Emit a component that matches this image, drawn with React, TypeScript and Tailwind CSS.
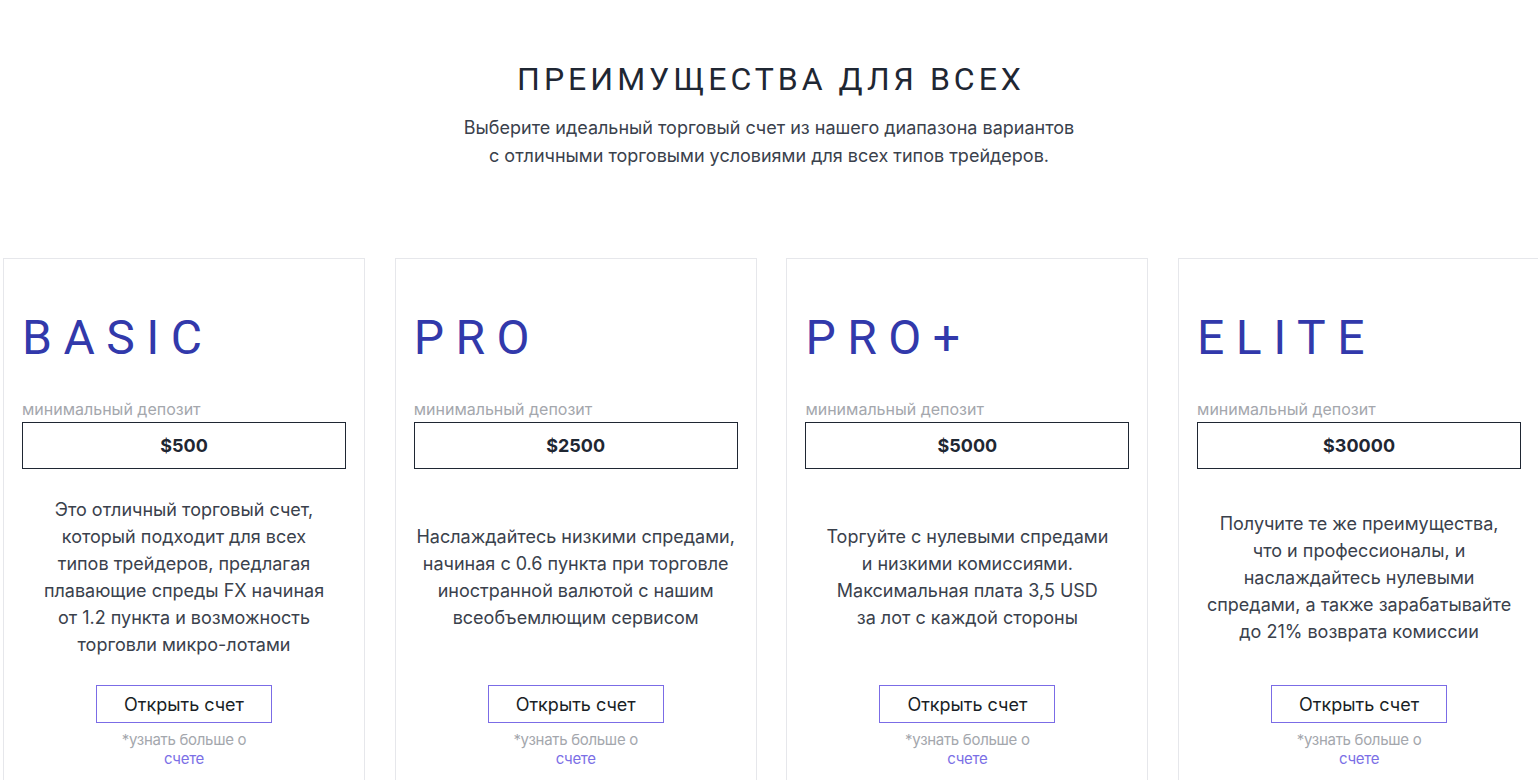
import React from "react";

const cards = [
  {
    name: "BASIC",
    deposit: "$500",
    lines: [
      "Это отличный торговый счет,",
      "который подходит для всех",
      "типов трейдеров, предлагая",
      "плавающие спреды FX начиная",
      "от 1.2 пункта и возможность",
      "торговли микро-лотами",
    ],
  },
  {
    name: "PRO",
    deposit: "$2500",
    lines: [
      "Наслаждайтесь низкими спредами,",
      "начиная с 0.6 пункта при торговле",
      "иностранной валютой с нашим",
      "всеобъемлющим сервисом",
    ],
  },
  {
    name: "PRO+",
    deposit: "$5000",
    lines: [
      "Торгуйте с нулевыми спредами",
      "и низкими комиссиями.",
      "Максимальная плата 3,5 USD",
      "за лот с каждой стороны",
    ],
  },
  {
    name: "ELITE",
    deposit: "$30000",
    lines: [
      "Получите те же преимущества,",
      "что и профессионалы, и",
      "наслаждайтесь нулевыми",
      "спредами, а также зарабатывайте",
      "до 21% возврата комиссии",
    ],
  },
];

export default function App() {
  return (
    <div
      className="w-[1538px] h-[780px] overflow-hidden bg-white"
      style={{ fontFamily: "Inter, 'Noto Sans', sans-serif" }}
    >
      <div className="flex flex-col items-center pt-[63px]">
        <h1
          className="text-[32px] leading-[32px] font-normal tracking-[4px] text-[#1f2733] pl-[4px]"
          style={{ fontFamily: "Roboto, 'Liberation Sans', sans-serif" }}
        >
          ПРЕИМУЩЕСТВА ДЛЯ ВСЕХ
        </h1>
        <p className="mt-[19px] text-center text-[18px] leading-[28px] text-[#3a414c]">
          Выберите идеальный торговый счет из нашего диапазона вариантов
          <br />с отличными торговыми условиями для всех типов трейдеров.
        </p>
      </div>

      <div className="flex gap-[29.7px] pl-[3px] mt-[88px]">
        {cards.map((c) => (
          <div
            key={c.name}
            className="w-[362px] shrink-0 border border-[#e6e7eb] px-[18px] pt-[55px] h-[560px]"
          >
            <div
              className="text-[48px] leading-[48px] tracking-[11.5px] text-[#3239ab]"
              style={{ fontFamily: "Roboto, 'Liberation Sans', sans-serif" }}
            >
              {c.name}
            </div>
            <div className="mt-[37px] text-[16px] leading-[20px] text-[#a4a7ad]">
              минимальный депозит
            </div>
            <div className="mt-[3px] h-[47px] border border-[#1f2733] flex items-center justify-center text-[18px] font-bold text-[#1f2733]">
              {c.deposit}
            </div>
            <div className="h-[216px] flex items-center justify-center">
              <p className="text-center text-[18px] leading-[27px] text-[#3a414c]">
                {c.lines.map((l, i) => (
                  <React.Fragment key={i}>
                    {l}
                    {i < c.lines.length - 1 && <br />}
                  </React.Fragment>
                ))}
              </p>
            </div>
            <div className="flex justify-center">
              <button className="w-[176px] h-[38px] border border-[#7b6ce6] text-[18px] text-[#1a1f26] bg-white">
                Открыть счет
              </button>
            </div>
            <div className="mt-[7px] text-center text-[15px] leading-[19px] text-[#a4a7ad] tracking-[-0.3px]">
              *узнать больше о
              <br />
              <span className="text-[#7b6fe6]">счете</span>
            </div>
          </div>
        ))}
      </div>
    </div>
  );
}
